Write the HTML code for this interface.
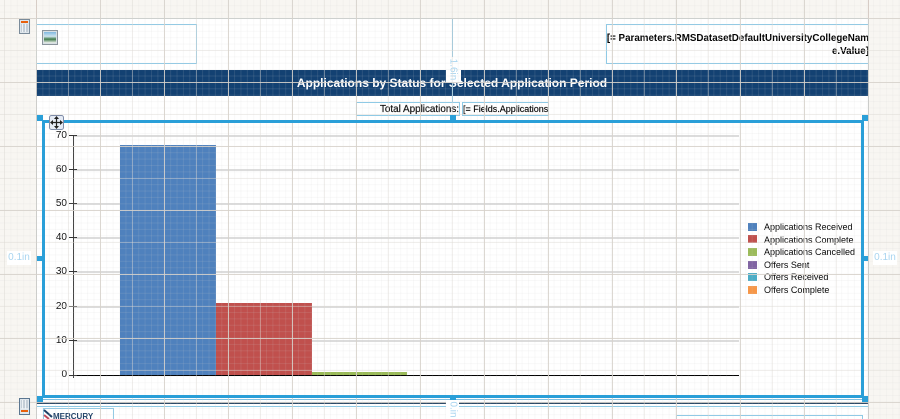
<!DOCTYPE html>
<html style="overflow:hidden;width:900px;height:419px"><head><meta charset="utf-8">
<style>
html,body{margin:0;padding:0}
body{width:900px;height:419px;overflow:hidden;background:#f8f6f2;font-family:"Liberation Sans",sans-serif;color:#111}
div{position:absolute;box-sizing:border-box}
#root{left:0;top:0;width:900px;height:419px;overflow:hidden;background:#f8f6f2}
.t{white-space:nowrap}
.box{border:1px solid #8ecae6}
.yl{font-size:10px;width:30px;text-align:right;left:37px;line-height:12px;color:#111}
.gl{left:74px;width:665px;height:2px;background:#dcdcdc}
.tk{left:69px;width:8px;height:1px;background:#333}
.sw{left:748px;width:9px;height:8px}
.lg{left:764px;font-size:9px;line-height:12px;color:#000;white-space:nowrap}
.lbl{color:#a9d5f0;font-size:10px;background:#fff;text-align:center}
.h{background:#2a9fd8}
</style></head><body>
<div id="root">
<div style="left:36px;top:18px;width:832px;height:401px;background:#fff"></div>
<div style="left:36px;top:0;width:1px;height:18px;background:#d8a8a0"></div>
<div style="left:868px;top:0;width:1px;height:18px;background:#d8a8a0"></div>
<div style="left:36px;top:18px;width:1px;height:401px;background:#7fa6c4"></div>
<div style="left:868px;top:18px;width:1px;height:401px;background:#7fa6c4"></div>
<div style="left:36px;top:18px;width:832px;height:1px;background:#7fbfe0"></div>

<div class="box" style="left:36px;top:24px;width:161px;height:40px"></div>
<div class="box" style="left:606px;top:24px;width:263px;height:40px"></div>
<div class="t" style="left:560px;top:33px;width:309px;font-size:9.8px;font-weight:bold;line-height:12.5px;text-align:right;color:#000">[= Parameters.RMSDatasetDefaultUniversityCollegeNam<br>e.Value]</div>

<div style="left:36px;top:70px;width:832px;height:26px;background:#134172"></div>
<div class="t" style="left:252px;top:75px;width:400px;font-size:12px;font-weight:bold;color:#fff;line-height:16px;text-align:center">Applications by Status for Selected Application Period</div>

<div style="left:452px;top:18px;width:1px;height:84px;background:#7fbfe0"></div>
<div class="lbl" style="left:446px;top:57px;width:15px;height:26px"><div class="t" style="left:-6px;top:6px;width:26px;line-height:13px;transform:rotate(90deg)">1.6in</div></div>

<div class="box" style="left:356px;top:102px;width:104px;height:14px"></div>
<div class="t" style="left:356px;top:103px;width:103px;font-size:9.9px;line-height:14px;text-align:right;color:#111;-webkit-text-stroke:.2px #111">Total Applications:</div>
<div class="box" style="left:462px;top:102px;width:87px;height:14px"></div>
<div class="t" style="left:463px;top:102px;font-size:9px;line-height:14px;color:#000;-webkit-text-stroke:.15px #000">[= Fields.Applications</div>

<!-- chart -->
<div class="gl" style="top:135px"></div><div class="gl" style="top:169px"></div><div class="gl" style="top:203px"></div><div class="gl" style="top:237px"></div><div class="gl" style="top:271px"></div><div class="gl" style="top:306px"></div><div class="gl" style="top:340px"></div>
<div style="left:120px;top:145px;width:96px;height:230px;background:#4f81bd"></div>
<div style="left:216px;top:303px;width:96px;height:72px;background:#c0504d"></div>
<div style="left:312px;top:372px;width:95px;height:3px;background:#9bbb59"></div>
<div style="left:73px;top:135px;width:1px;height:243px;background:#444"></div>
<div style="left:73px;top:375px;width:666px;height:1px;background:#000"></div>
<div class="tk" style="top:135px"></div><div class="tk" style="top:169px"></div><div class="tk" style="top:203px"></div><div class="tk" style="top:237px"></div><div class="tk" style="top:271px"></div><div class="tk" style="top:306px"></div><div class="tk" style="top:340px"></div><div class="tk" style="top:375px"></div>
<div class="yl t" style="top:130px">70</div><div class="yl t" style="top:164px">60</div><div class="yl t" style="top:198px">50</div><div class="yl t" style="top:232px">40</div><div class="yl t" style="top:266px">30</div><div class="yl t" style="top:301px">20</div><div class="yl t" style="top:335px">10</div><div class="yl t" style="top:369px">0</div>

<div class="sw" style="top:223px;background:#4f81bd"></div><div class="lg" style="top:221px">Applications Received</div>
<div class="sw" style="top:235px;background:#c0504d"></div><div class="lg" style="top:234px">Applications Complete</div>
<div class="sw" style="top:248px;background:#9bbb59"></div><div class="lg" style="top:246px">Applications Cancelled</div>
<div class="sw" style="top:261px;background:#8064a2"></div><div class="lg" style="top:259px">Offers Sent</div>
<div class="sw" style="top:273px;background:#4bacc6"></div><div class="lg" style="top:271px">Offers Received</div>
<div class="sw" style="top:286px;background:#f79646"></div><div class="lg" style="top:284px">Offers Complete</div>

<!-- lower band -->
<div style="left:36px;top:399px;width:832px;height:1px;background:#7fbfe0"></div>
<div style="left:36px;top:402px;width:832px;height:2px;background:#2c4a68"></div>
<div style="left:36px;top:406px;width:832px;height:1px;background:#8ecae6"></div>
<div class="box" style="left:43px;top:408px;width:71px;height:14px"></div>
<div class="box" style="left:676px;top:415px;width:187px;height:8px"></div>
<svg style="position:absolute;left:43px;top:409px" width="10" height="10"><path d="M1 1L9 8" stroke="#1d3f66" stroke-width="2" fill="none"/><path d="M1 6L6 10" stroke="#c04a5a" stroke-width="2" fill="none"/></svg>
<div class="t" style="left:53px;top:413px;font-size:8px;font-weight:bold;color:#1d3f66;line-height:8px">MERCURY</div>

<!-- fine & major grid overlay -->
<div style="left:0;top:0;width:900px;height:419px;
background-image:
linear-gradient(90deg,rgba(214,209,202,.78) 1px,transparent 1px),
linear-gradient(180deg,rgba(214,209,202,.78) 1px,transparent 1px),
linear-gradient(90deg,rgba(222,218,212,.4) 1px,transparent 1px),
linear-gradient(180deg,rgba(222,218,212,.4) 1px,transparent 1px),
linear-gradient(90deg,rgba(205,205,205,.13) 1px,transparent 1px),
linear-gradient(180deg,rgba(205,205,205,.13) 1px,transparent 1px);
background-size:64px 64px,64px 64px,32px 32px,32px 32px,6.4px 6.4px,6.4px 6.4px;
background-position:36px 0,0 18px,4px 0,0 18px,4px 0,0 18px"></div>

<!-- selection -->
<div style="left:42px;top:120px;width:822px;height:278px;border:3px solid #2a9fd8"></div>
<div class="h" style="left:37px;top:115px;width:6px;height:6px"></div>
<div class="h" style="left:450px;top:115px;width:6px;height:6px"></div>
<div class="h" style="left:862px;top:115px;width:6px;height:6px"></div>
<div class="h" style="left:37px;top:256px;width:6px;height:5px"></div>
<div class="h" style="left:862px;top:256px;width:6px;height:5px"></div>
<div class="h" style="left:37px;top:396px;width:6px;height:6px"></div>
<div class="h" style="left:450px;top:396px;width:6px;height:6px"></div>
<div class="h" style="left:862px;top:396px;width:6px;height:6px"></div>

<div class="lbl t" style="left:7px;top:251px;width:24px;height:14px;line-height:14px">0.1in</div>
<div class="lbl t" style="left:873px;top:251px;width:24px;height:14px;line-height:14px">0.1in</div>
<div class="lbl" style="left:446px;top:400px;width:13px;height:19px"><div class="t" style="left:-6px;top:3px;width:26px;line-height:13px;transform:rotate(90deg)">0.in</div></div>

<!-- calc icons -->
<svg style="position:absolute;left:19px;top:19px" width="11" height="15"><rect x=".5" y=".5" width="10" height="14" fill="#dfe6ec" stroke="#7a8b9a"/><rect x="2" y="2" width="7" height="2" fill="#e8600c"/><path d="M2 6h7M2 8h7M2 10h7M2 12h7" stroke="#a8b6c2"/><path d="M3.500 5v8M6.500 5v8" stroke="#eef2f5"/></svg>
<svg style="position:absolute;left:19px;top:398px" width="11" height="17"><rect x=".5" y=".5" width="10" height="16" fill="#dfe6ec" stroke="#5b7690"/><path d="M2 3h7M2 5h7M2 7h7M2 9h7" stroke="#a8b6c2"/><path d="M3.500 2v9M6.500 2v9" stroke="#eef2f5"/><rect x="2" y="12" width="7" height="2" fill="#e8600c"/></svg>
<!-- image icon -->
<svg style="position:absolute;left:42px;top:30px" width="16" height="15"><defs><linearGradient id="g" x1="0" y1="0" x2="0" y2="1"><stop offset="0" stop-color="#7fb8e0"/><stop offset=".4" stop-color="#cfe4ee"/><stop offset=".65" stop-color="#3f7a4a"/><stop offset="1" stop-color="#f2f4f2"/></linearGradient></defs><rect x=".5" y=".5" width="15" height="14" fill="#d8dfe4" stroke="#8a949c"/><rect x="2" y="2" width="12" height="11" fill="url(#g)"/></svg>
<!-- move icon -->
<svg style="position:absolute;left:49px;top:115px" width="15" height="15"><rect x=".5" y=".5" width="14" height="14" rx="2" fill="#e6ecf6" stroke="#7f8ca8"/><path d="M7.500 3v9M3 7.500h9" stroke="#222" stroke-width="1.200"/><path d="M7.500 1L5 4h5zM7.500 14L5 11h5zM1 7.500L4 5v5zM14 7.500L11 5v5z" fill="#222"/></svg>
</div>
</body></html>
